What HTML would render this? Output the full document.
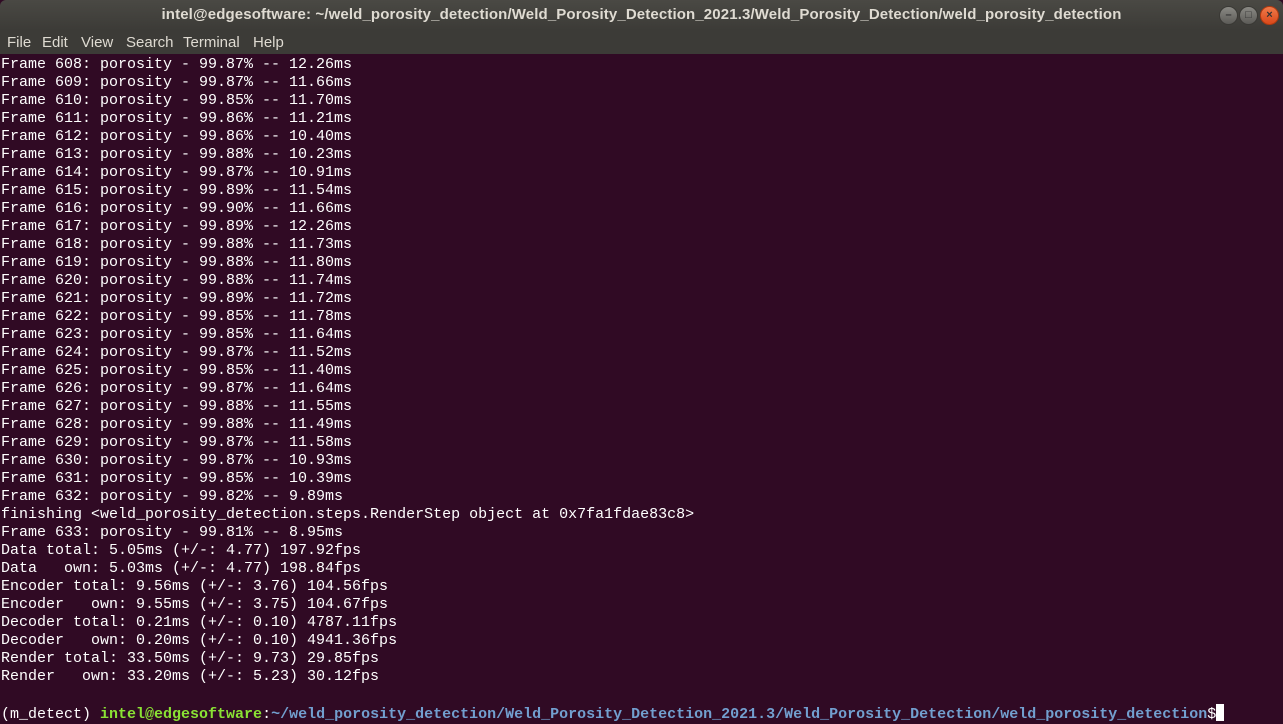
<!DOCTYPE html><html><head><style>
body{margin:0;width:1283px;height:722px;overflow:hidden;background:#300a24;font-family:"Liberation Sans",sans-serif}
#tb{position:absolute;left:0;top:0;width:1283px;height:30px;background:linear-gradient(#4a4944,#3c3b37);border-radius:6px 6px 0 0;color:#dfdbd2;font-weight:bold;font-size:15px;letter-spacing:0.13px;line-height:30px;text-align:center}
#mb{position:absolute;left:0;top:30px;width:1283px;height:24px;background:#3c3b37;color:#dfdbd2;font-size:15px;line-height:26px}
#mb span{position:absolute;top:0}
.btn{position:absolute;top:6px;width:17px;height:17px;border-radius:50%;background:linear-gradient(#8a8984,#5c5b57);border:1px solid #3a3935;font-size:11px;line-height:17px;text-align:center;color:#333;font-weight:bold}
pre{position:absolute;left:1px;top:56px;margin:0;font-family:"Liberation Mono",monospace;font-size:15px;line-height:18px;color:#ffffff}
.g{color:#8ae234;font-weight:bold}.b{color:#729fcf;font-weight:bold}
.cur{background:#fff;display:inline-block;width:8px;height:17px;vertical-align:-3px}
</style></head><body>
<div id="tb">intel@edgesoftware: ~/weld_porosity_detection/Weld_Porosity_Detection_2021.3/Weld_Porosity_Detection/weld_porosity_detection</div>
<div class="btn" style="left:1219px">–</div><div class="btn" style="left:1239px">□</div><div class="btn" style="left:1260px;background:linear-gradient(#f07a4a,#d9481a);border-color:#b03a10">×</div>
<div id="mb"><span style="left:7px">File</span><span style="left:42px">Edit</span><span style="left:81px">View</span><span style="left:126px">Search</span><span style="left:183px">Terminal</span><span style="left:253px">Help</span></div>
<pre>Frame 608: porosity - 99.87% -- 12.26ms
Frame 609: porosity - 99.87% -- 11.66ms
Frame 610: porosity - 99.85% -- 11.70ms
Frame 611: porosity - 99.86% -- 11.21ms
Frame 612: porosity - 99.86% -- 10.40ms
Frame 613: porosity - 99.88% -- 10.23ms
Frame 614: porosity - 99.87% -- 10.91ms
Frame 615: porosity - 99.89% -- 11.54ms
Frame 616: porosity - 99.90% -- 11.66ms
Frame 617: porosity - 99.89% -- 12.26ms
Frame 618: porosity - 99.88% -- 11.73ms
Frame 619: porosity - 99.88% -- 11.80ms
Frame 620: porosity - 99.88% -- 11.74ms
Frame 621: porosity - 99.89% -- 11.72ms
Frame 622: porosity - 99.85% -- 11.78ms
Frame 623: porosity - 99.85% -- 11.64ms
Frame 624: porosity - 99.87% -- 11.52ms
Frame 625: porosity - 99.85% -- 11.40ms
Frame 626: porosity - 99.87% -- 11.64ms
Frame 627: porosity - 99.88% -- 11.55ms
Frame 628: porosity - 99.88% -- 11.49ms
Frame 629: porosity - 99.87% -- 11.58ms
Frame 630: porosity - 99.87% -- 10.93ms
Frame 631: porosity - 99.85% -- 10.39ms
Frame 632: porosity - 99.82% -- 9.89ms
finishing &lt;weld_porosity_detection.steps.RenderStep object at 0x7fa1fdae83c8&gt;
Frame 633: porosity - 99.81% -- 8.95ms
Data total: 5.05ms (+/-: 4.77) 197.92fps
Data   own: 5.03ms (+/-: 4.77) 198.84fps
Encoder total: 9.56ms (+/-: 3.76) 104.56fps
Encoder   own: 9.55ms (+/-: 3.75) 104.67fps
Decoder total: 0.21ms (+/-: 0.10) 4787.11fps
Decoder   own: 0.20ms (+/-: 0.10) 4941.36fps
Render total: 33.50ms (+/-: 9.73) 29.85fps
Render   own: 33.20ms (+/-: 5.23) 30.12fps

(m_detect) <span class="g">intel@edgesoftware</span>:<span class="b">~/weld_porosity_detection/Weld_Porosity_Detection_2021.3/Weld_Porosity_Detection/weld_porosity_detection</span>$<span class="cur"></span></pre>
</body></html>
